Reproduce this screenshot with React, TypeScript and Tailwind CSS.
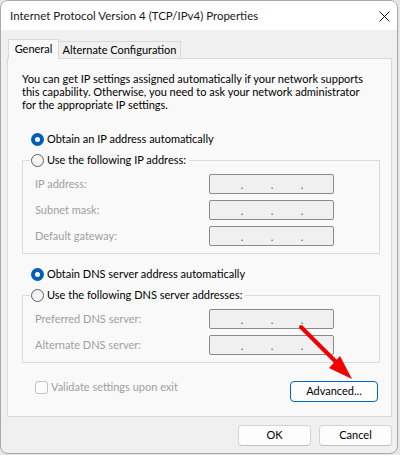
import React from "react";

const font = "font-['Lato','Noto_Sans',sans-serif]";

function Field() {
  return (
    <div className="w-[125px] h-[20px] border border-[#8a8a8a] rounded-[2px] bg-[#f0f0f0] flex items-center pl-[30px] gap-[26px] text-[#5a5a70] leading-none">
      <span className="w-[4px] flex justify-center">.</span>
      <span className="w-[4px] flex justify-center">.</span>
      <span className="w-[4px] flex justify-center">.</span>
    </div>
  );
}

function Radio({ checked }: { checked?: boolean }) {
  return checked ? (
    <span className="w-[13px] h-[13px] rounded-full bg-[#005fb8] flex items-center justify-center shrink-0">
      <span className="w-[5px] h-[5px] rounded-full bg-white" />
    </span>
  ) : (
    <span className="w-[13px] h-[13px] rounded-full border border-[#5f5f5f] bg-[#f5f5f5] shrink-0" />
  );
}

function Row({ label }: { label: string }) {
  return (
    <div className="flex items-center h-[20px]">
      <span className="w-[186px] pl-[12px] text-[#a0a0a0]">{label}</span>
      <Field />
    </div>
  );
}

export default function App() {
  return (
    <div className={`relative w-[400px] h-[455px] bg-[#e6e6e6] ${font} text-[11px] whitespace-nowrap text-black`}>
      <div className="w-[398px] h-[454px] bg-[#f0f0f0] border border-[#a8a8a8] rounded-[8px] overflow-hidden flex flex-col">
        {/* Title bar */}
        <div className="h-[29px] bg-white flex items-center justify-between pl-[9px] pr-[7px] shrink-0">
          <span className="text-[11.5px] text-[#1a1a1a]">Internet Protocol Version 4 (TCP/IPv4) Properties</span>
          <svg width="11" height="11" viewBox="0 0 11 11" className="mt-[1px]">
            <path d="M0.5 0.5 L10.5 10.5 M10.5 0.5 L0.5 10.5" stroke="#1a1a1a" strokeWidth="1" />
          </svg>
        </div>

        {/* Body */}
        <div className="pl-[6px] pt-[9px] flex flex-col">
          {/* Tabs */}
          <div className="flex items-end h-[19px] relative z-10">
            <div className="ml-px w-[51px] h-[20px] -mb-px bg-[#f9f9f9] border border-b-0 border-[#d9d9d9] flex items-center justify-center pb-[1px]">
              General
            </div>
            <div className="w-[122px] h-[17px] bg-[#f0f0f0] border border-b-0 border-l-0 border-[#d9d9d9] flex items-center justify-center">
              Alternate Configuration
            </div>
          </div>

          {/* Panel */}
          <div className="w-[385px] h-[359px] bg-[#f9f9f9] border border-[#d9d9d9] flex flex-col">
            <p className="pl-[14px] pt-[13px] leading-[13px]">
              You can get IP settings assigned automatically if your network supports
              <br />
              this capability. Otherwise, you need to ask your network administrator
              <br />
              for the appropriate IP settings.
            </p>

            <div className="ml-[23px] mt-[20px] h-[16px] flex items-center gap-[3px]">
              <Radio checked />
              <span>Obtain an IP address automatically</span>
            </div>

            <div className="ml-[14px] mt-[13px] w-[358px] h-[94px] border border-[#dcdcdc] flex flex-col">
              <div className="-mt-[9px] ml-[7px] h-[16px] self-start flex items-center gap-[3px] bg-[#f9f9f9] pl-px pr-[3px]">
                <Radio />
                <span>Use the following IP address:</span>
              </div>
              <div className="mt-[6px] flex flex-col gap-[6px]">
                <Row label="IP address:" />
                <Row label="Subnet mask:" />
                <Row label="Default gateway:" />
              </div>
            </div>

            <div className="ml-[23px] mt-[12px] h-[16px] flex items-center gap-[3px]">
              <Radio checked />
              <span>Obtain DNS server address automatically</span>
            </div>

            <div className="ml-[14px] mt-[13px] w-[358px] h-[68px] border border-[#dcdcdc] flex flex-col">
              <div className="-mt-[9px] ml-[7px] h-[16px] self-start flex items-center gap-[3px] bg-[#f9f9f9] pl-px pr-[3px]">
                <Radio />
                <span>Use the following DNS server addresses:</span>
              </div>
              <div className="mt-[6px] flex flex-col gap-[6px]">
                <Row label="Preferred DNS server:" />
                <Row label="Alternate DNS server:" />
              </div>
            </div>

            <div className="mt-[16px] flex items-start justify-between pr-[13px]">
              <div className="ml-[27px] h-[16px] flex items-center gap-[3px] text-[#a0a0a0]">
                <span className="w-[13px] h-[13px] rounded-[3px] border border-[#c2c2c2] bg-[#fbfbfb]" />
                <span>Validate settings upon exit</span>
              </div>
              <button className="mt-[2px] w-[88px] h-[21px] rounded-[4px] border border-[#0067c0] bg-[#fdfdfd] flex items-center justify-center">
                Advanced...
              </button>
            </div>
          </div>

          {/* Bottom buttons */}
          <div className="mt-[8px] flex justify-end gap-[8px] pr-[5px]">
            <button className="w-[73px] h-[21px] rounded-[4px] border border-[#d4d4d4] border-b-[#c0c0c0] bg-[#fdfdfd] flex items-center justify-center">
              OK
            </button>
            <button className="w-[73px] h-[21px] rounded-[4px] border border-[#d4d4d4] border-b-[#c0c0c0] bg-[#fdfdfd] flex items-center justify-center">
              Cancel
            </button>
          </div>
        </div>
      </div>

      {/* Red arrow annotation */}
      <svg className="absolute left-0 top-0 pointer-events-none" width="400" height="455">
        <line x1="301" y1="327" x2="340" y2="366" stroke="#f00000" strokeWidth="4" strokeLinecap="round" />
        <polygon points="340,356 352,379 329,368" fill="#f00000" />
      </svg>
    </div>
  );
}
